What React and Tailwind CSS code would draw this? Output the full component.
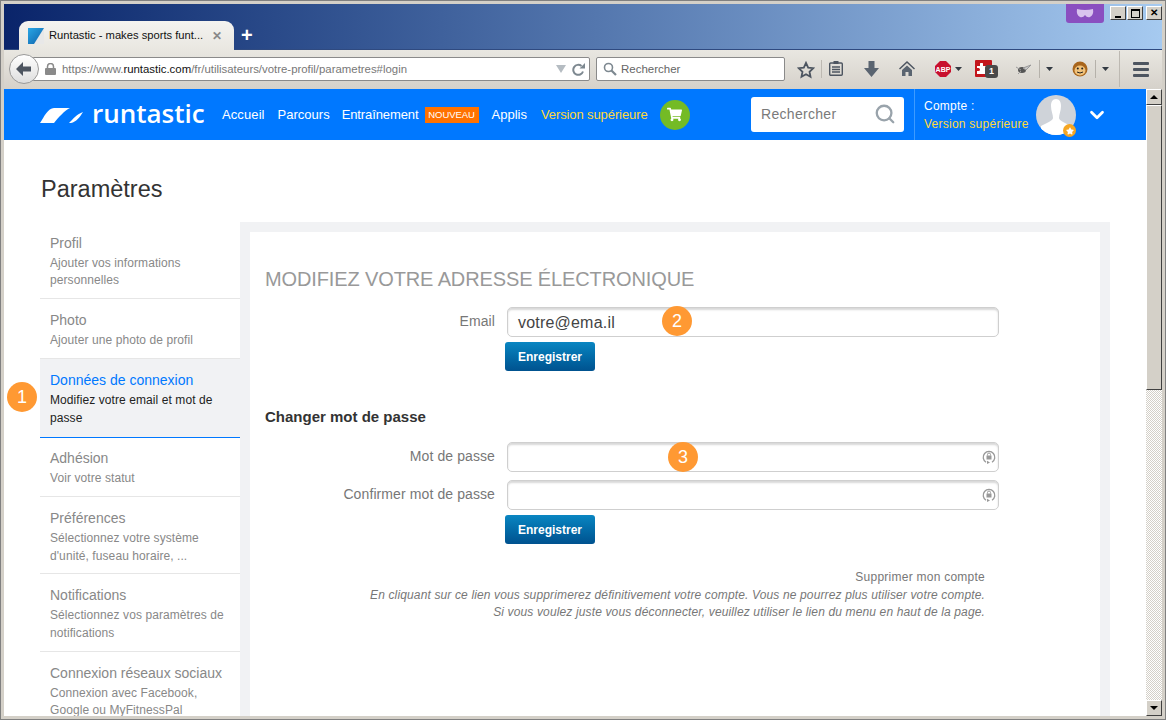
import { FaShoppingCart, FaStar } from "react-icons/fa";
import { FiChevronDown, FiSearch } from "react-icons/fi";

const font = "font-['Liberation_Sans',Arial,sans-serif]";

const menu = [
  { title: "Profil", lines: ["Ajouter vos informations", "personnelles"], h: "h-[77px] pt-[11px]", tight: true },
  { title: "Photo", lines: ["Ajouter une photo de profil"], h: "h-[60px] pt-[11px]" },
  { title: "Données de connexion", lines: ["Modifiez votre email et mot de", "passe"], h: "h-[78px] pt-[11px]", active: true },
  { title: "Adhésion", lines: ["Voir votre statut"], h: "h-[59px] pt-[10px]" },
  { title: "Préférences", lines: ["Sélectionnez votre système", "d'unité, fuseau horaire, ..."], h: "h-[77px] pt-[11px]" },
  { title: "Notifications", lines: ["Sélectionnez vos paramètres de", "notifications"], h: "h-[78px] pt-[11px]" },
  { title: "Connexion réseaux sociaux", lines: ["Connexion avec Facebook,", "Google ou MyFitnessPal"], h: "h-[78px] pt-[11px]", last: true, tight: true },
];

const Badge = ({ n, className }) => (
  <div className={`absolute w-[30px] h-[30px] rounded-full bg-[#ff9933] text-white text-[18px] flex items-center justify-center ${className}`}>
    {n}
  </div>
);

const LockIcon = () => (
  <svg width="14" height="15" viewBox="0 0 14 15" className="absolute right-[2px] top-[7px]">
    <path d="M4 12.200A5.800 5.800 0 1 1 10 12.200" fill="none" stroke="#999" strokeWidth="1.300" />
    <path d="M5 10.800l3 1.600-3 1.600z" fill="#999" />
    <rect x="4.500" y="5.500" width="5" height="4" fill="#999" />
    <path d="M5.500 5.500V4.500a1.500 1.500 0 0 1 3 0v1" fill="none" stroke="#999" />
  </svg>
);

const Field = ({ label, value, lock, className = "" }) => (
  <div className={`flex items-start ${className}`}>
    <div className="w-[230px] text-right text-[14px] leading-[28px] tracking-[0.1px] text-[#777]">{label}</div>
    <div className="relative ml-[12px] w-[492px] h-[30px] rounded-[5px] border border-[#cfcfcf] shadow-[inset_0_2px_2px_#d8d8d8] pl-[10px] text-[16px] leading-[29px] tracking-[0.2px] text-[#444]">
      {value}
      {lock && <LockIcon />}
    </div>
  </div>
);

const SaveButton = ({ className = "" }) => (
  <button className={`ml-[240px] w-[90px] h-[29px] rounded-[3px] bg-gradient-to-b from-[#0a86c2] to-[#00528f] text-white text-[12px] font-bold ${className}`}>
    Enregistrer
  </button>
);

const WinButton = ({ children }) => (
  <div className="w-[16px] h-[14px] bg-[#d4d0c8] border border-t-white border-l-white border-r-[#404040] border-b-[#404040] flex items-center justify-center">
    {children}
  </div>
);

const Toolbar = () => (
  <div className="relative h-[40px] bg-gradient-to-b from-[#e9e7e1] to-[#d5d1ca] border-t border-t-[#2f4a80] shrink-0">
    {/* back button */}
    <div className="absolute left-[5px] top-[4px] w-[30px] h-[30px] rounded-full border border-[#9a9a9a] bg-gradient-to-b from-white to-[#dedede] flex items-center justify-center z-10">
      <svg width="16" height="14" viewBox="0 0 16 14">
        <path d="M7 0L0 7l7 7V9.500h8v-5H7z" fill="#4d5560" />
      </svg>
    </div>
    {/* url bar */}
    <div className="absolute left-[29px] top-[7px] w-[557px] h-[24px] bg-white border border-[#8a8a8a] rounded-r-[2px] flex items-center pl-[11px] pt-[2px] text-[11.400px] text-[#777]">
      <svg width="11" height="12" viewBox="0 0 11 12" className="mr-[6px] -mt-[2px]">
        <rect y="5" width="11" height="7" rx="1" fill="#8a8a8a" />
        <path d="M2.500 5V3.500a3 3 0 0 1 6 0V5" fill="none" stroke="#8a8a8a" strokeWidth="1.500" />
      </svg>
      <span>https://www.</span>
      <span className="text-[#111]">runtastic.com</span>
      <span>/fr/utilisateurs/votre-profil/parametres#login</span>
      <svg width="10" height="8" viewBox="0 0 10 8" className="absolute left-[522px] top-[7px]">
        <path d="M0 0h10L5 8z" fill="#b5bcc2" />
      </svg>
      <svg width="13" height="13" viewBox="0 0 13 13" className="absolute left-[538px] top-[5px]">
        <path d="M11 8.500A5 5 0 1 1 9.500 3" fill="none" stroke="#7d8890" strokeWidth="2" />
        <path d="M7.500 5.500H13V0z" fill="#7d8890" />
      </svg>
    </div>
    {/* search bar */}
    <div className="absolute left-[592px] top-[7px] w-[189px] h-[24px] bg-white border border-[#8a8a8a] rounded-[2px] flex items-center pl-[6px] pt-[2px] text-[11.500px] text-[#666]">
      <svg width="14" height="14" viewBox="0 0 14 14" className="mr-[4px] -mt-[2px]">
        <circle cx="5.500" cy="5.500" r="4" fill="none" stroke="#7d8890" strokeWidth="1.600" />
        <path d="M8.500 8.500L13 13" stroke="#7d8890" strokeWidth="2.200" />
      </svg>
      Rechercher
    </div>
    {/* star */}
    <svg width="18" height="18" viewBox="0 0 24 24" className="absolute left-[793px] top-[11px]">
      <path d="M12 2.500l2.900 6.300 6.800.8-5 4.700 1.300 6.800-6-3.400-6 3.400 1.300-6.800-5-4.700 6.800-.8z" fill="none" stroke="#4d5560" strokeWidth="2.400" />
    </svg>
    <div className="absolute left-[817px] top-[10px] w-px h-[18px] bg-[#bdb9b2]" />
    {/* bookmarks list */}
    <svg width="14" height="15" viewBox="0 0 14 15" className="absolute left-[825px] top-[11px]">
      <rect x="0.700" y="2" width="12.600" height="12.300" rx="1" fill="none" stroke="#4d5560" strokeWidth="1.400" />
      <rect x="4.500" y="0" width="5" height="3" fill="#4d5560" />
      <path d="M3 6h8M3 8.500h8M3 11h8" stroke="#4d5560" strokeWidth="1.300" />
    </svg>
    {/* download */}
    <svg width="15" height="16" viewBox="0 0 15 16" className="absolute left-[860px] top-[11px]">
      <path d="M4.500 0h6v7H15l-7.500 9L0 7h4.500z" fill="#5a6470" />
    </svg>
    {/* home */}
    <svg width="16" height="15" viewBox="0 0 16 15" className="absolute left-[895px] top-[11px]">
      <path d="M8 0L0 7.500l1 1L8 2l7 6.500 1-1z" fill="#4d5560" />
      <path d="M3 9l5-4.500L13 9v6H9.500v-4h-3v4H3z" fill="#5a6470" />
    </svg>
    {/* adblock */}
    <svg width="16" height="16" viewBox="0 0 16 16" className="absolute left-[931px] top-[11px]">
      <path d="M5 0h6l5 5v6l-5 5H5l-5-5V5z" fill="#c8102e" />
      <text x="8" y="10.500" textAnchor="middle" fontSize="7" fontWeight="700" fill="#fff">ABP</text>
    </svg>
    <svg width="7" height="4" viewBox="0 0 7 4" className="absolute left-[951px] top-[17px]"><path d="M0 0h7L3.500 4z" fill="#333a42" /></svg>
    {/* puzzle addon */}
    <div className="absolute left-[971px] top-[10px] w-[17px] h-[17px] rounded-[1px] bg-[#c3161c] text-white">
      <svg width="11" height="11" viewBox="0 0 11 11" className="ml-[2px] mt-[3px]"><path d="M0 3h3V1a1.500 1.500 0 0 1 3 0v2h3v3h1.500a1.500 1.500 0 0 1 0 3H9v2H0V8h1.500a1.500 1.500 0 0 0 0-3H0z" fill="#fff" /></svg>
    </div>
    <div className="absolute left-[981px] top-[15px] w-[13px] h-[13px] rounded-[3px] bg-[#4a4a4a] text-white text-[9px] font-bold leading-[13px] text-center">1</div>
    {/* fly addon */}
    <svg width="16" height="12" viewBox="0 0 16 12" className="absolute left-[1012px] top-[13px]">
      <ellipse cx="6" cy="7" rx="4" ry="3" fill="#555" />
      <path d="M7 5l8-3-5 5zM0 4l5 3M2 11l3-3" stroke="#999" fill="#c8c8c8" />
    </svg>
    <div className="absolute left-[1035px] top-[10px] w-px h-[18px] bg-[#b5b1aa]" />
    <svg width="7" height="4" viewBox="0 0 7 4" className="absolute left-[1042px] top-[17px]"><path d="M0 0h7L3.500 4z" fill="#333a42" /></svg>
    {/* greasemonkey */}
    <svg width="16" height="16" viewBox="0 0 16 16" className="absolute left-[1068px] top-[11px]">
      <circle cx="8" cy="8" r="7.500" fill="#a8651c" />
      <ellipse cx="8" cy="9.500" rx="5.500" ry="5" fill="#f1c27a" />
      <circle cx="5.800" cy="7.500" r="1" fill="#222" />
      <circle cx="10.200" cy="7.500" r="1" fill="#222" />
      <path d="M5 11q3 2 6 0" stroke="#222" fill="none" />
    </svg>
    <div className="absolute left-[1091px] top-[10px] w-px h-[18px] bg-[#b5b1aa]" />
    <svg width="7" height="4" viewBox="0 0 7 4" className="absolute left-[1098px] top-[17px]"><path d="M0 0h7L3.500 4z" fill="#333a42" /></svg>
    <div className="absolute left-[1115px] top-[1px] w-px h-[36px] bg-[#bdb9b2]" />
    {/* hamburger */}
    <div className="absolute left-[1129px] top-[12px] w-[16px] flex flex-col gap-[3px]">
      <div className="h-[3px] bg-[#4d5560] rounded-[1px]" />
      <div className="h-[3px] bg-[#4d5560] rounded-[1px]" />
      <div className="h-[3px] bg-[#4d5560] rounded-[1px]" />
    </div>
  </div>
);

const Logo = () => (
  <div className="flex items-center w-[165px] shrink-0">
    <svg width="44" height="16" viewBox="0 0 44 16" className="shrink-0 mt-[1px]">
      <path d="M0 16C4 10 8 1 14 1H30C25 3 18 11 14 16z" fill="#fff" />
      <path d="M29 16C33 12 37 7 43 5C40 10 36 15 31 16z" fill="#fff" />
    </svg>
    <span className="ml-[8px] text-white text-[26px] leading-none font-['Open_Sans',sans-serif] font-semibold -mt-[3px]">runtastic</span>
  </div>
);

const NavBar = () => (
  <div className="relative h-[51px] shrink-0 bg-[#0078ff] flex items-center pl-[36px] text-[13px] text-white">
    <Logo />
    <div className="ml-[17px] flex items-center">
      <span className="tracking-[0.1px]">Accueil</span>
      <span className="ml-[13px]">Parcours</span>
      <span className="ml-[12px] tracking-[-0.1px]">Entraînement</span>
      <span className="ml-[6px] bg-[#ff7200] text-[9.500px] leading-[16px] w-[54px] text-center tracking-[-0.1px]">NOUVEAU</span>
      <span className="ml-[13px]">Applis</span>
      <span className="ml-[14px] text-[#ffd93b] tracking-[-0.1px]">Version supérieure</span>
      <span className="ml-[12px] w-[30px] h-[30px] rounded-full bg-[#74bb25] flex items-center justify-center">
        <FaShoppingCart size={15} className="text-white" />
      </span>
    </div>
    <div className="absolute left-[747px] top-[8px] w-[153px] h-[35px] bg-white rounded-[3px] pl-[10px] flex items-center text-[14px] text-[#7a7a7a] tracking-[0.300px]">
      Rechercher
      <FiSearch size={22} strokeWidth={2.500} className="absolute right-[8px] top-[6px] text-[#99a3ab]" />
    </div>
    <div className="absolute left-[910px] top-0 h-[51px] w-px bg-[#3d9bff]" />
    <div className="absolute left-[920px] top-[8px] text-[12px] leading-[18px] tracking-[0.250px]">
      <div>Compte :</div>
      <div className="text-[#ffd93b]">Version supérieure</div>
    </div>
    <div className="absolute left-[1032px] top-[6px] w-[40px] h-[40px] rounded-full bg-[#cfd3d9] overflow-hidden">
      <svg width="40" height="40" viewBox="0 0 40 40">
        <path d="M20 4c3.500 0 5 3 5 7 0 5-2 8-2 12 0 3 7 5 12 8v9H5v-9c5-3 12-5 12-8 0-4-2-7-2-12 0-4 1.500-7 5-7z" fill="#fff" />
      </svg>
    </div>
    <div className="absolute left-[1059px] top-[35px] w-[13px] h-[13px] rounded-full bg-[#f5a623] flex items-center justify-center">
      <FaStar size={8} className="text-white" />
    </div>
    <FiChevronDown size={22} strokeWidth={3} className="absolute left-[1082px] top-[15px] text-white" />
  </div>
);

const Sidebar = () => (
  <div className="w-[200px] shrink-0">
    {menu.map((m) => (
      <div key={m.title}>
        <div className={`${m.h} pl-[10px] pr-[4px] ${m.active ? "bg-[#f1f2f4]" : ""} ${m.last || m.active ? "" : "border-b border-b-[#e6e6e6]"}`}>
          <div className={`text-[14px] leading-[20px] ${m.active ? "text-[#0078ff]" : "text-[#888]"}`}>{m.title}</div>
          <div className={`text-[12px] tracking-[0.080px] ${m.tight ? "mt-[2px] leading-[17px]" : "mt-[1px] leading-[18px]"} ${m.active ? "text-[#222]" : "text-[#888]"}`}>
            {m.lines.map((l) => (
              <div key={l}>{l}</div>
            ))}
          </div>
        </div>
        {m.active && <div className="h-px bg-[#0078ff]" />}
      </div>
    ))}
  </div>
);

const Content = () => (
  <div className="flex-1 bg-[#f1f2f4] pt-[10px] px-[10px] h-[494px]">
    <div className="relative bg-white h-full pl-[15px]">
      <h2 className="pt-[35px] text-[20px] leading-[24px] tracking-[-0.120px] text-[#999]">MODIFIEZ VOTRE ADRESSE ÉLECTRONIQUE</h2>
      <Field label="Email" value="votre@ema.il" className="mt-[16px]" />
      <SaveButton className="mt-[5px] block" />
      <h3 className="mt-[37px] text-[15px] leading-[18px] font-bold text-[#333]">Changer mot de passe</h3>
      <Field label="Mot de passe" lock className="mt-[16px]" />
      <Field label="Confirmer mot de passe" lock className="mt-[8px]" />
      <SaveButton className="mt-[5px] block" />
      <div className="mt-[25px] w-[720px] text-right text-[12px] leading-[17.500px] text-[#777]">
        <div className="tracking-[0.250px]">Supprimer mon compte</div>
        <div className="italic tracking-[0.140px]">En cliquant sur ce lien vous supprimerez définitivement votre compte. Vous ne pourrez plus utiliser votre compte.</div>
        <div className="italic tracking-[0.140px]">Si vous voulez juste vous déconnecter, veuillez utiliser le lien du menu en haut de la page.</div>
      </div>
      <Badge n="2" className="left-[412px] top-[74px]" />
      <Badge n="3" className="left-[418px] top-[210px]" />
    </div>
  </div>
);

const Scrollbar = () => (
  <div className="w-[16px] shrink-0 flex flex-col bg-[repeating-conic-gradient(#d4d0c8_0_25%,#ffffff_0_50%)] bg-[length:2px_2px]">
    <div className="h-[16px] bg-[#d4d0c8] border border-t-white border-l-white border-r-[#404040] border-b-[#404040] flex items-center justify-center">
      <svg width="8" height="4" viewBox="0 0 8 4"><path d="M4 0l4 4H0z" fill="#000" /></svg>
    </div>
    <div className="h-[285px] bg-[#d4d0c8] border border-t-white border-l-white border-r-[#404040] border-b-[#404040]" />
    <div className="mt-auto h-[16px] bg-[#d4d0c8] border border-t-white border-l-white border-r-[#404040] border-b-[#404040] flex items-center justify-center">
      <svg width="8" height="4" viewBox="0 0 8 4"><path d="M0 0h8L4 4z" fill="#000" /></svg>
    </div>
  </div>
);

export default function App() {
  return (
    <div className={`${font} relative w-[1166px] h-[720px] overflow-hidden bg-[#d4d0c8] border-[4px] border-[#d4d0c8] outline outline-1 -outline-offset-1 outline-[#808080] flex flex-col`}>
      {/* title bar */}
      <div className="relative h-[45px] shrink-0 bg-gradient-to-r from-[#0a246a] to-[#a6caf0]">
        <div className="absolute z-10 left-[15px] top-[17px] w-[215px] h-[29px] rounded-t-[9px] bg-gradient-to-b from-[#f4f3f0] to-[#e9e7e1] flex items-center pl-[9px] text-[11.200px] text-[#111]">
          <svg width="16" height="16" viewBox="0 0 16 16" className="mr-[5px] shrink-0">
            <defs>
              <linearGradient id="fav" x1="0" y1="0" x2="1" y2="1">
                <stop offset="0" stopColor="#29a7e6" />
                <stop offset="1" stopColor="#0d5fa8" />
              </linearGradient>
            </defs>
            <rect width="16" height="16" fill="url(#fav)" />
            <path d="M16 0L6 16h10z" fill="#e8e8e8" />
          </svg>
          Runtastic - makes sports funt...
          <span className="absolute right-[12px] top-[6px] text-[12px] font-bold text-[#888]">✕</span>
        </div>
        <span className="absolute left-[237px] top-[21px] text-white text-[20px] font-bold leading-[20px]">+</span>
        <div className="absolute left-[1062px] top-0 w-[38px] h-[19px] rounded-b-[3px] bg-[#8a4fc0] flex items-center justify-center">
          <svg width="18" height="9" viewBox="0 0 18 9"><path d="M1 0q8 2 16 0 1 6-3 8-3 1-5-2-2 3-5 2Q0 6 1 0z" fill="#d9c3ee" /></svg>
        </div>
        <div className="absolute left-[1106px] top-[2px] flex gap-[1px]">
          <WinButton><div className="w-[6px] h-[2px] bg-black mt-[7px]" /></WinButton>
          <WinButton><div className="w-[9px] h-[9px] border border-t-2 border-black" /></WinButton>
          <div className="ml-[2px]"><WinButton><span className="text-[10px] font-bold leading-none text-black">✕</span></WinButton></div>
        </div>
      </div>
      <Toolbar />
      <div className="flex-1 flex min-h-0">
        <div className="relative flex-1 flex flex-col bg-white min-w-0 overflow-hidden">
          <NavBar />
          <h1 className="pl-[37px] pt-[35px] text-[23.500px] leading-[28px] text-[#333] shrink-0">Paramètres</h1>
          <div className="mt-[19px] ml-[36px] mr-[36px] flex">
            <Sidebar />
            <Content />
          </div>
          <Badge n="1" className="left-[3px] top-[293px]" />
        </div>
        <Scrollbar />
      </div>
    </div>
  );
}
